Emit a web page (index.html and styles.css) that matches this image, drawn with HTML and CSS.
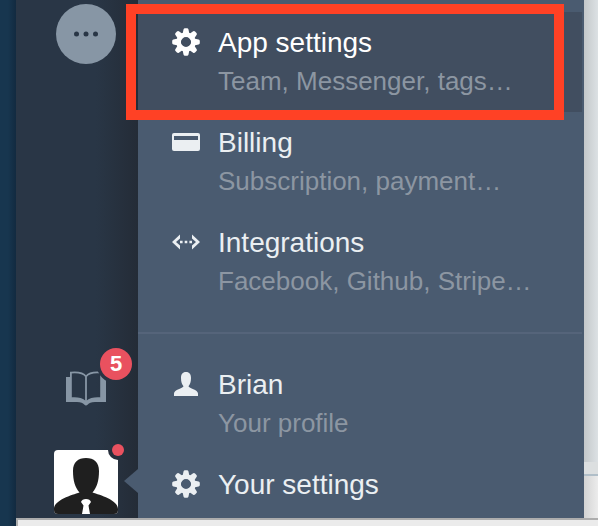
FILE: index.html
```html
<!DOCTYPE html>
<html lang="en">
<head>
<meta charset="utf-8">
<title>App settings menu</title>
<link rel="stylesheet" href="styles.css">
</head>
<body>
<svg class="symbols" aria-hidden="true">
  <symbol id="gear" viewBox="-14 -14 28 28">
    <g fill="currentColor">
      <path id="teeth" d="M-3.4-8-2.5-12.6Q-2.2-13.8-1-13.8H1Q2.2-13.8 2.5-12.6L3.4-8V-5H-3.4ZM-3.4 8-2.5 12.6Q-2.2 13.8-1 13.8H1Q2.2 13.8 2.5 12.6L3.4 8V5H-3.4Z"/>
      <use href="#teeth" transform="rotate(45)"/>
      <use href="#teeth" transform="rotate(90)"/>
      <use href="#teeth" transform="rotate(135)"/>
    </g>
    <circle r="7.4" fill="none" stroke="currentColor" stroke-width="4.6"/>
  </symbol>
</svg>
<div class="screen">
  <div class="backdrop-left"></div>
  <nav class="sidebar" aria-label="Main">
    <button class="more" type="button" aria-label="More">
      <svg width="24" height="6" viewBox="0 0 24 6" fill="#293646"><circle cx="2.5" cy="3" r="2.5"/><circle cx="12" cy="3" r="2.5"/><circle cx="21.5" cy="3" r="2.5"/></svg>
    </button>
    <a class="docs" href="#docs" aria-label="Guides">
      <svg width="40" height="36" viewBox="0 0 40 36">
        <path fill="#8796a5" d="M0 7H4.4V27.6C10 26.8 16 27.6 20 31C24 27.6 30 26.8 35.6 27.6V7H40V32H29C25 32 23.2 33 21.8 34.6Q20 36.4 18.2 34.6C16.8 33 15 32 11 32H0Z"/>
        <path fill="none" stroke="#8796a5" stroke-width="1.8" d="M4.9 29V2.6C11 2 17 2.6 20 6.5C23 2.6 29 2 35.1 2.6V29M20 6V31"/>
        <circle cx="50" cy="-6" r="19.5" fill="#283444"/>
      </svg>
      <span class="badge">5</span>
    </a>
    <a class="account" href="#account" aria-label="Account">
      <svg width="64" height="64" viewBox="0 0 64 64">
        <defs><clipPath id="photo"><rect width="64" height="64" rx="4"/></clipPath></defs>
        <g clip-path="url(#photo)">
          <path fill="#fff" d="M0 0H64V64H0Z"/>
          <path fill="#1f1f1f" d="M32 8C40 8 45 12 45 21C45 31 43 37 38.5 42.5C46 45 64 50 64 59V64H0V59C0 50 18 45 25.5 42.5C21 37 19 31 19 21C19 12 24 8 32 8Z"/>
          <path fill="#fff" d="M27 52Q28 49 32 49T37 52L34.5 55.5L36 64H28L29.5 55.5Z"/>
          <circle cx="64" cy="0" r="10" fill="#272f3c"/>
        </g>
      </svg>
      <span class="dot"></span>
      <span class="pointer"></span>
    </a>
  </nav>
  <main class="menu">
    <a class="item active" href="#app">
      <svg class="icon" width="28" height="28"><use href="#gear"/></svg>
      <span class="title">App settings</span>
      <span class="detail">Team, Messenger, tags…</span>
    </a>
    <a class="item" href="#billing">
      <svg class="icon" width="28" height="28" viewBox="0 0 28 28"><rect y="5" width="28" height="18" rx="2" fill="currentColor"/><path fill="#4a5b70" d="M2 8H26V12H2Z"/></svg>
      <span class="title">Billing</span>
      <span class="detail">Subscription, payment…</span>
    </a>
    <a class="item" href="#integrations">
      <svg class="icon" width="28" height="28" viewBox="0 0 28 28"><path fill="currentColor" d="M8 6.5V10.5L4 14L8 17.5V21.5L0 14ZM20 6.5V10.5L24 14L20 17.5V21.5L28 14ZM8 12.7H10.6V15.3H8ZM12.7 12.7H15.3V15.3H12.7ZM17.4 12.7H20V15.3H17.4Z"/></svg>
      <span class="title">Integrations</span>
      <span class="detail">Facebook, Github, Stripe…</span>
    </a>
    <hr class="divider">
    <a class="item" href="#profile">
      <svg class="icon" width="28" height="28" viewBox="0 0 28 28"><path fill="currentColor" d="M14 2C17.6 2 19 4.5 19 8C19 12 18 14.5 16.5 16.2C17 18.5 26 19.5 26 23.5V26H2V23.5C2 19.5 11 18.5 11.5 16.2C10 14.5 9 12 9 8C9 4.5 10.4 2 14 2Z"/></svg>
      <span class="title">Brian</span>
      <span class="detail">Your profile</span>
    </a>
    <a class="item" href="#settings">
      <svg class="icon" width="28" height="28"><use href="#gear"/></svg>
      <span class="title">Your settings</span>
    </a>
  </main>
  <div class="backdrop-right"><div class="panel"></div></div>
  <div class="bottom-window"></div>
  <div class="highlight"></div>
</div>
</body>
</html>
```
FILE: styles.css
```css
* {
  box-sizing: border-box;
}

body {
  margin: 0;
  font-family: "Liberation Sans", Arial, sans-serif;
}

.symbols {
  display: none;
}

.screen {
  position: relative;
  display: grid;
  grid-template-columns: 16px 122px 1fr 14px;
  grid-template-rows: minmax(0, 1fr) 8px;
  height: 100vh;
  overflow: hidden;
  background: #17344f;
}

.backdrop-left {
  grid-row: 1 / 3;
  background: linear-gradient(90deg, #17364f 0, #17364f 8px, #122a40 100%);
}

.sidebar {
  display: flex;
  flex-direction: column;
  align-items: flex-start;
  padding: 4px 0 4px 38px;
  background: linear-gradient(90deg, #293646 0, #293646 80px, #242c37 100%);
}

.more {
  display: flex;
  align-items: center;
  justify-content: center;
  width: 60px;
  height: 60px;
  margin-left: 2px;
  padding: 0;
  border: 0;
  border-radius: 50%;
  background: #8796a5;
}

.docs {
  position: relative;
  margin: auto 0 44px 12px;
}

.docs svg,
.account svg {
  display: block;
}

.badge {
  position: absolute;
  top: -22px;
  left: 34px;
  width: 32px;
  height: 32px;
  border-radius: 50%;
  background: #e9515f;
  color: #fff;
  font-size: 22px;
  font-weight: bold;
  line-height: 32px;
  text-align: center;
}

.account {
  position: relative;
}

.dot {
  position: absolute;
  top: -6px;
  right: -6px;
  width: 12px;
  height: 12px;
  border-radius: 50%;
  background: #e9515f;
}

.pointer {
  position: absolute;
  top: 19px;
  left: 70px;
  width: 14px;
  height: 24px;
  background: #4a5b70;
  clip-path: polygon(100% 0, 100% 100%, 0 50%);
}

.menu {
  padding: 12px 2px 0 0;
  overflow: hidden;
  background: #4a5b70;
}

.item {
  display: grid;
  grid-template-columns: 28px 1fr;
  grid-template-rows: 42px 34px;
  column-gap: 18px;
  padding: 10px 0 14px 34px;
  color: #ebeff2;
  text-decoration: none;
  white-space: nowrap;
}

.active {
  background: #414e60;
  color: #fff;
}

.icon {
  margin-top: 6px;
}

.title {
  font-size: 28px;
  line-height: 42px;
}

.detail {
  grid-column: 2;
  color: #8c96a2;
  font-size: 26px;
  line-height: 34px;
}

.divider {
  height: 2px;
  margin: 20px 0;
  border: 0;
  background: #55647a;
}

.backdrop-right {
  display: flex;
  align-items: flex-end;
  background: linear-gradient(90deg, #c4c8ca, #dce1e4);
}

.panel {
  width: 100%;
  height: 56px;
  border-top: 12px solid #dcdfe0;
  background: linear-gradient(#b0bec8 2px, transparent 2px), linear-gradient(90deg, #d3d3d3, #ececec);
}

.bottom-window {
  grid-column: 2 / 5;
  border: solid #adadad;
  border-width: 2px 0 0 2px;
  background: #ebebeb;
}

.highlight {
  position: absolute;
  top: 4px;
  right: 34px;
  left: 126px;
  height: 116px;
  border: 10px solid #ff4125;
  pointer-events: none;
}
```
